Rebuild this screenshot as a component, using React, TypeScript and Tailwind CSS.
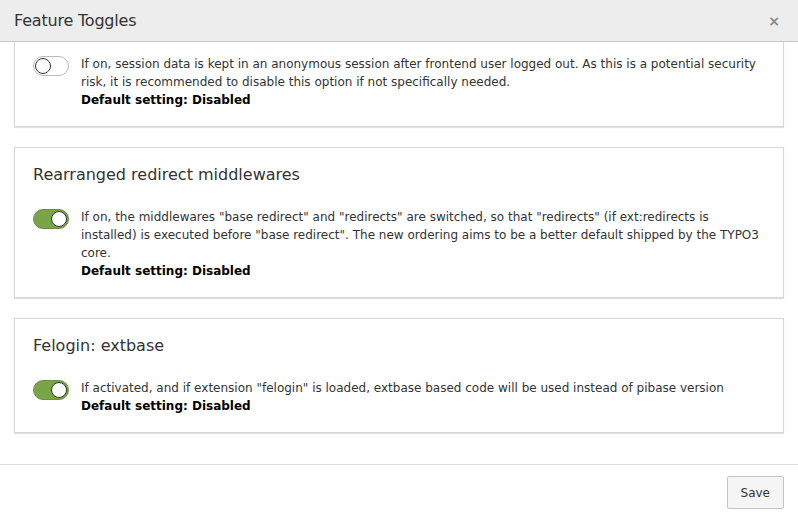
import React from 'react';

interface Toggle {
  id: string;
  title?: string;
  description: string;
  enabled: boolean;
}

const toggles: Toggle[] = [
  {
    id: 'security.frontend.keepSessionDataOnLogout',
    description:
      'If on, session data is kept in an anonymous session after frontend user logged out. As this is a potential security risk, it is recommended to disable this option if not specifically needed.',
    enabled: false,
  },
  {
    id: 'rearrangedRedirectMiddlewares',
    title: 'Rearranged redirect middlewares',
    description:
      'If on, the middlewares "base redirect" and "redirects" are switched, so that "redirects" (if ext:redirects is installed) is executed before "base redirect". The new ordering aims to be a better default shipped by the TYPO3 core.',
    enabled: true,
  },
  {
    id: 'felogin.extbase',
    title: 'Felogin: extbase',
    description:
      'If activated, and if extension "felogin" is loaded, extbase based code will be used instead of pibase version',
    enabled: true,
  },
];

const Switch = ({ on }: { on: boolean }) => (
  <div
    className={`relative shrink-0 w-[36px] h-[20px] rounded-full border ${
      on ? 'bg-[#79a548] border-[#6a9140]' : 'bg-white border-[#bbb]'
    }`}
  >
    <div
      className={`absolute top-[1px] w-[16px] h-[16px] rounded-full bg-white border border-[#333] ${
        on ? 'right-[1px]' : 'left-[1px]'
      }`}
    />
  </div>
);

const ToggleCard = ({ toggle, first }: { toggle: Toggle; first?: boolean }) => (
  <div
    className={`bg-white border border-[#d7d7d7] shadow-[0_1px_1px_rgba(0,0,0,0.12)] px-[18px] pb-[17px] ${
      first ? 'border-t-0 pt-[14px]' : 'pt-[18px]'
    }`}
  >
    {toggle.title && (
      <h3 className="text-[16px] leading-[18px] text-[#333] mb-[25px]">{toggle.title}</h3>
    )}
    <div className="flex items-start gap-[12px]">
      <Switch on={toggle.enabled} />
      <div className="text-[12px] leading-[18px] text-[#333] -mt-[1px]">
        <p>{toggle.description}</p>
        <p className="font-bold text-black">Default setting: Disabled</p>
      </div>
    </div>
  </div>
);

export default function App() {
  return (
    <div
      className="w-[798px] h-[517px] flex flex-col bg-white overflow-hidden"
      style={{ fontFamily: '"DejaVu Sans", Verdana, sans-serif' }}
    >
      {/* Header */}
      <div className="h-[42px] shrink-0 flex items-center justify-between bg-[#ededed] border-b border-[#c8c8c8] pl-[14px] pr-[18px]">
        <h2 className="text-[16px] text-[#333] tracking-[-0.2px]">Feature Toggles</h2>
        <span className="text-[#888] text-[14px] font-bold leading-none">×</span>
      </div>

      {/* Body */}
      <div className="flex-1 overflow-hidden px-[14px]">
        <div className="flex flex-col gap-[20px]">
          {toggles.map((t, i) => (
            <ToggleCard key={t.id} toggle={t} first={i === 0} />
          ))}
        </div>
      </div>

      {/* Footer */}
      <div className="h-[53px] shrink-0 border-t border-[#ddd] flex items-start justify-end px-[14px] pt-[11px]">
        <button className="h-[33px] px-[13px] bg-[#f5f5f5] border border-[#c4c4c4] rounded-[2px] text-[12px] text-[#333]">
          Save
        </button>
      </div>
    </div>
  );
}
